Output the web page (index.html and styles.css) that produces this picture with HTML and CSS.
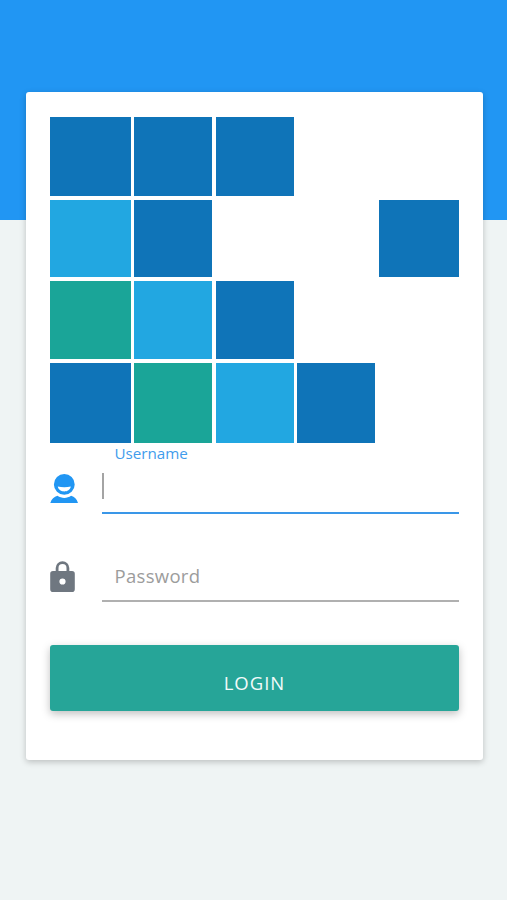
FILE: index.html
```html
<!DOCTYPE html>
<html lang="en">
<head>
<meta charset="utf-8">
<title>Login</title>
<link rel="stylesheet" href="styles.css">
</head>
<body>
<div class="hero">
  <main class="card">
    <div class="logo">
      <i class="c dark"></i><i class="c dark"></i><i class="c dark"></i><i></i><i></i>
      <i class="c sky"></i><i class="c dark"></i><i></i><i></i><i class="c dark"></i>
      <i class="c teal"></i><i class="c sky"></i><i class="c dark"></i><i></i><i></i>
      <i class="c dark"></i><i class="c teal"></i><i class="c sky"></i><i class="c dark"></i><i></i>
    </div>
    <div class="field field-user">
      <svg class="icon icon-user" viewBox="0 0 28 29" aria-hidden="true">
        <path fill="#2196f3" fill-rule="evenodd" d="M14.300 0a10.400 10.400 0 0 1 10.400 10.400 10.400 10.400 0 0 1-20.800 0A10.400 10.400 0 0 1 14.300 0zM7.800 12.600c1.200 6.600 11.800 6.600 13 0-4 .9-9 .9-13 0z"/>
        <path fill="#2196f3" d="M7.500 21.800c4 2.800 9.600 2.800 13.600 0 3.400 1.200 5.700 3.200 6.900 7.200H.3C1.500 25 4.100 23 7.500 21.800z"/>
      </svg>
      <div class="control active">
        <span class="float-label">Username</span>
        <span class="caret"></span>
      </div>
    </div>
    <div class="field field-pass">
      <svg class="icon icon-lock" viewBox="0 0 25 31" aria-hidden="true">
        <path fill="#6f7780" fill-rule="evenodd" d="M5.700 10V7a6.800 6.800 0 0 1 13.600 0v3h2.700A2.800 2.800 0 0 1 24.800 12.800v15.400a2.800 2.800 0 0 1-2.800 2.800H3a2.800 2.800 0 0 1-2.800-2.800V12.800A2.800 2.800 0 0 1 3 10zM8.500 10h8V7a4 4 0 0 0-8 0zM12.500 17.400a3.100 3.100 0 1 0 0 6.200 3.100 3.100 0 0 0 0-6.200z"/>
      </svg>
      <div class="control">
        <span class="placeholder">Password</span>
      </div>
    </div>
    <button class="login" type="button">LOGIN</button>
  </main>
</div>
</body>
</html>
```
FILE: styles.css
```css
html, body {
  margin: 0;
  padding: 0;
  height: 900px;
  overflow: hidden;
  background: #eff4f4;
  font-family: "Open Sans", "Noto Sans", sans-serif;
}
.hero {
  height: 220px;
  background: #2196f3;
  padding: 92px 24px 0 26px;
  box-sizing: border-box;
}
.card {
  height: 668px;
  box-sizing: border-box;
  padding: 25px 24px 0 24px;
  background: #fff;
  border-radius: 3px;
  box-shadow: 0 2px 6px rgba(0, 0, 0, .22);
}
.logo {
  display: grid;
  grid-template-columns: 81px 78px 78px 78.5px 80.5px;
  grid-template-rows: 79px 77.5px 78.5px 80.5px;
  column-gap: 3.25px;
  row-gap: 3.5px;
}
.c { display: block; }
.dark { background: #0f74b8; }
.sky { background: #22a7e1; }
.teal { background: #1aa598; }
.field {
  display: flex;
  align-items: flex-start;
}
.field-user { margin-top: 30px; }
.field-pass { margin-top: 0; }
.icon { flex: none; display: block; }
.icon-user { width: 28px; height: 29px; margin: 1px 23.500px 0 0; }
.icon-lock { width: 25px; height: 31px; margin: 47px 26.500px 0 0; }
.control {
  position: relative;
  flex: 1;
  box-sizing: border-box;
  height: 41px;
  border-bottom: 2px solid #3a97e8;
}
.field-pass .control {
  height: 88px;
  border-bottom: 2px solid #b0b0b0;
  display: flex;
  align-items: flex-end;
  padding: 0 0 12px 13px;
}
.float-label {
  position: absolute;
  left: 13px;
  top: -30px;
  font-size: 15.200px;
  line-height: 20px;
  color: #3f9cec;
}
.caret {
  display: block;
  width: 2px;
  height: 26px;
  margin-left: 0;
  background: #a4a4a4;
}
.placeholder {
  font-size: 18.500px;
  line-height: 25px;
  color: #9c9c9c;
  letter-spacing: .3px;
}
.login {
  display: block;
  width: 409px;
  height: 66px;
  margin-top: 43px;
  border: 0;
  border-radius: 3px;
  background: #26a598;
  color: #f2fbfa;
  font-family: inherit;
  font-size: 18.500px;
  letter-spacing: 1px;
  padding: 8px 0 0;
  box-shadow: 0 3px 8px rgba(0, 0, 0, .25);
}
```
